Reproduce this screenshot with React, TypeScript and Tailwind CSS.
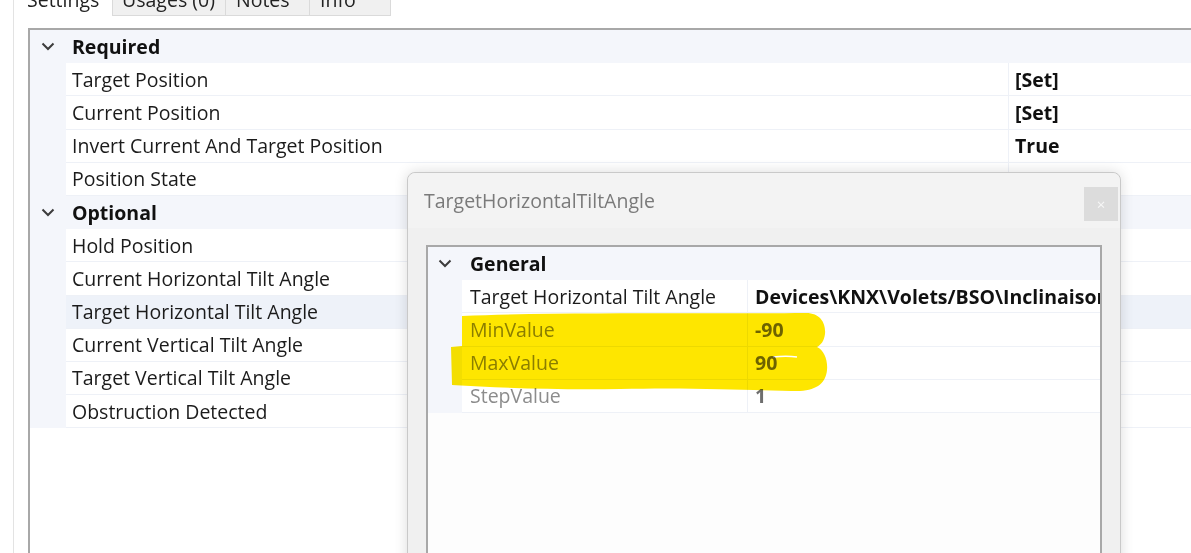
import React from "react"

type Row = { label: string; value?: string; selected?: boolean }

const required: Row[] = [
  { label: "Target Position", value: "[Set]" },
  { label: "Current Position", value: "[Set]" },
  { label: "Invert Current And Target Position", value: "True" },
  { label: "Position State", value: "[Set]" },
]

const optional: Row[] = [
  { label: "Hold Position" },
  { label: "Current Horizontal Tilt Angle" },
  { label: "Target Horizontal Tilt Angle", selected: true },
  { label: "Current Vertical Tilt Angle" },
  { label: "Target Vertical Tilt Angle" },
  { label: "Obstruction Detected" },
]

function Chevron() {
  return (
    <svg width="14" height="9" viewBox="0 0 14 9" className="text-[#3c3c3c]">
      <polyline points="1.5,1.5 7,7 12.5,1.5" fill="none" stroke="currentColor" strokeWidth="2" />
    </svg>
  )
}

function Category({ label }: { label: string }) {
  return (
    <div className="flex h-[33.2px] items-center bg-[#f4f6fb]">
      <div className="flex w-[36px] shrink-0 justify-center">
        <Chevron />
      </div>
      <span className="pl-[6px] font-bold text-[#111]">{label}</span>
    </div>
  )
}

function MainRow({ row }: { row: Row }) {
  const bg = row.selected ? "bg-[#eef2f9]" : "bg-white"
  return (
    <div className="flex h-[33.2px]">
      <div className="w-[36px] shrink-0 bg-[#f4f6fb]" />
      <div
        className={`flex w-[943px] shrink-0 items-center whitespace-nowrap border-b border-r border-[#eef1f7] pl-[6px] text-[#1b1b1b] ${bg}`}
      >
        {row.label}
      </div>
      <div className={`flex flex-1 items-center border-b border-[#eef1f7] pl-[6px] font-bold text-[#111] ${bg}`}>
        {row.value}
      </div>
    </div>
  )
}

function Tabs() {
  const tabs = [
    { label: "Settings", w: "w-[99px]", pl: "pl-[13px]", active: true },
    { label: "Usages (0)", w: "w-[113px]", pl: "pl-[9px]" },
    { label: "Notes", w: "w-[84px]", pl: "pl-[10px]" },
    { label: "Info", w: "w-[81px]", pl: "pl-[10px]" },
  ]
  return (
    <div className="flex h-[16px]">
      {tabs.map((t) => (
        <div
          key={t.label}
          className={`${t.w} ${t.pl} h-full overflow-hidden border-r border-[#dadada] ${
            t.active ? "bg-white" : "border-b bg-[#f0f0f0]"
          }`}
        >
          <span className="-mt-[10px] block whitespace-nowrap leading-[20px] text-[#222]">{t.label}</span>
        </div>
      ))}
    </div>
  )
}

type DRow = { label: string; value: string; muted?: boolean }

const dialogRows: DRow[] = [
  { label: "Target Horizontal Tilt Angle", value: "Devices\\KNX\\Volets/BSO\\Inclinaison" },
  { label: "MinValue", value: "-90", muted: true },
  { label: "MaxValue", value: "90", muted: true },
  { label: "StepValue", value: "1", muted: true },
]

function Dialog() {
  return (
    <div className="absolute left-[407px] top-[172px] h-[420px] w-[714px] rounded-t-[8px] border border-[#c9c9c9] bg-[#f0f0f0] shadow-[0_0_14px_rgba(0,0,0,0.14)]">
      <div className="flex h-[55px] items-center rounded-t-[8px] bg-[#f3f3f3] pl-[16px] text-[19.5px] text-[#7a7a7a]">
        TargetHorizontalTiltAngle
      </div>
      <div className="absolute right-[2px] top-[14px] flex h-[34px] w-[34px] items-center justify-center bg-[#dcdcdc] text-[15px] text-[#f7f7f7]">
        ×
      </div>
      <div className="ml-[18px] mr-[18px] mt-[17px] h-[400px] overflow-hidden border-2 border-[#a8a8a8] bg-[#fdfdfd]">
        <div className="flex h-[33.2px] items-center bg-[#f4f6fb]">
          <div className="flex w-[34px] shrink-0 justify-center">
            <Chevron />
          </div>
          <span className="pl-[8px] font-bold text-[#111]">General</span>
        </div>
        {dialogRows.map((r) => (
          <div key={r.label} className="flex h-[33.2px]">
            <div className="w-[34px] shrink-0 bg-[#f4f6fb]" />
            <div
              className={`flex w-[286px] shrink-0 items-center whitespace-nowrap border-b border-r border-[#eef1f7] bg-white pl-[8px] ${
                r.muted ? "text-[#8c8c8c]" : "text-[#1b1b1b]"
              }`}
            >
              {r.label}
            </div>
            <div
              className={`flex min-w-0 flex-1 items-center overflow-hidden whitespace-nowrap border-b border-[#eef1f7] bg-white pl-[7px] font-bold ${
                r.muted ? "text-[#6e6e6e]" : "text-[#111]"
              }`}
            >
              {r.value}
            </div>
          </div>
        ))}
      </div>
    </div>
  )
}

function Marker() {
  return (
    <svg
      className="pointer-events-none absolute left-0 top-0 mix-blend-multiply"
      width="1191"
      height="553"
      viewBox="0 0 1191 553"
    >
      <path
        d="M462 316 C560 312 700 314 806 313 C821 313 826 324 825 334 C824 341 821 345 817 347 C824 350 828 360 827 370 C826 382 818 390 800 391 C760 391 700 387 620 389 C560 390 500 388 452 385 L451 347 L462 346 Z"
        fill="#fee600"
      />
      <path d="M773 357 C782 356 790 356 797 357" stroke="#ffffff" strokeWidth="1.5" fill="none" />
    </svg>
  )
}

export default function App() {
  return (
    <div className="relative h-[553px] w-[1191px] overflow-hidden bg-white font-['Open_Sans',sans-serif] text-[19.5px]">
      <div className="flex h-full">
        <div className="w-[13px] shrink-0 bg-white" />
        <div className="flex flex-1 flex-col border-l border-[#e3e3e3]">
          <Tabs />
          <div className="flex-1 pl-[14px] pt-[12px]">
            <div className="h-full border-l-2 border-t-2 border-[#a8a8a8]">
              <Category label="Required" />
              {required.map((r) => (
                <MainRow key={r.label} row={r} />
              ))}
              <Category label="Optional" />
              {optional.map((r) => (
                <MainRow key={r.label} row={r} />
              ))}
            </div>
          </div>
        </div>
      </div>
      <Dialog />
      <Marker />
    </div>
  )
}
